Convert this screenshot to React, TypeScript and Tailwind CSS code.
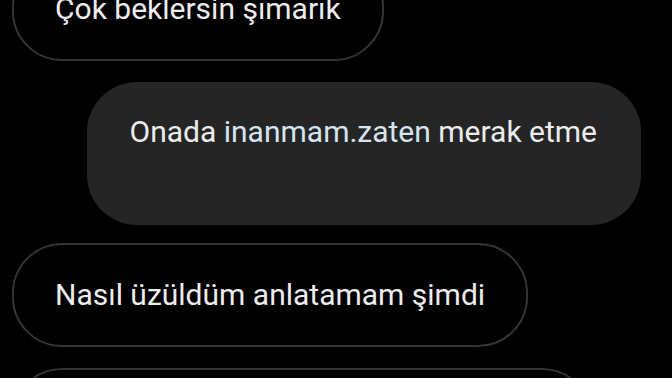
const bubble =
  "rounded-[50px] px-[41px] py-[30px] text-[30px] leading-[40px] text-[#ececec] whitespace-nowrap";

function Incoming({ children }: { children: React.ReactNode }) {
  return (
    <div className={`${bubble} self-start border-2 border-[#343434]`}>{children}</div>
  );
}

export default function App() {
  return (
    <div
      className="h-[378px] w-[672px] overflow-hidden bg-black"
      style={{ fontFamily: "Roboto, 'Noto Sans', sans-serif" }}
    >
      <div className="-mt-[43px] flex flex-col gap-[21px] px-3">
        <Incoming>Çok beklersin şımarık</Incoming>

        {/* Sent message */}
        <div
          className={`${bubble} mr-[19px] self-end rounded-[40px] bg-[#252525] pb-[33px] pl-[43px] pr-[44px]`}
        >
          Onada <span className="text-[#d4e4f1]">inanmam.zaten</span> merak etme
          <br />
          &nbsp;
        </div>

        <div className="-mt-[3px] flex flex-col gap-[21px]">
          <Incoming>Nasıl üzüldüm anlatamam şimdi</Incoming>

          <div className={`${bubble} w-[580px] self-start border-2 border-[#343434]`}>
            &nbsp;
          </div>
        </div>
      </div>
    </div>
  );
}
